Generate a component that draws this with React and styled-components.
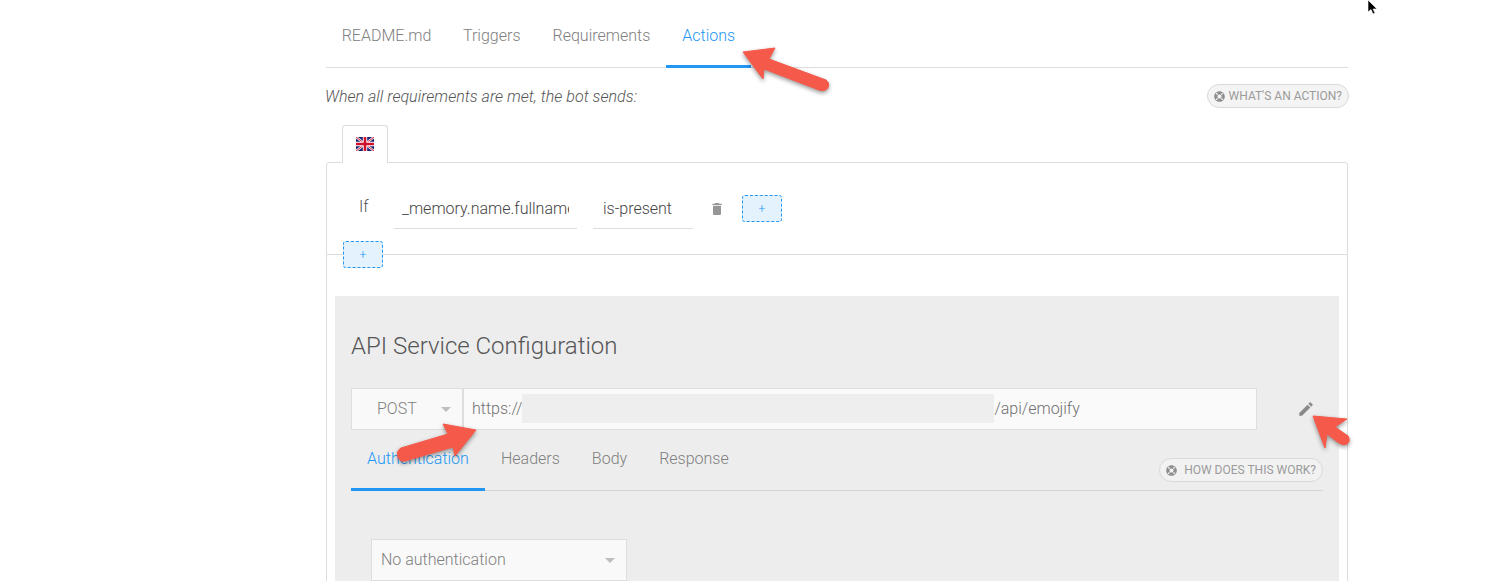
import React from "react";
import styled, { createGlobalStyle } from "styled-components";
import { FaLifeRing } from "react-icons/fa";
import { MdDelete, MdEdit } from "react-icons/md";

const Global = createGlobalStyle`
  html, body { margin: 0; padding: 0; background: #fff; }
  body { font-family: Roboto, "Liberation Sans", sans-serif; overflow: hidden; }
`;

const Page = styled.div`
  position: relative;
  width: 1504px;
  height: 581px;
  overflow: hidden;
  padding-left: 326px;
  box-sizing: border-box;
`;
const Column = styled.div`
  width: 1022px;
`;
const Tabs = styled.div`
  display: flex;
  height: ${(p) => p.$height}px;
  border-bottom: 1px solid ${(p) => p.$line};
  box-sizing: content-box;
`;
const Tab = styled.div`
  display: flex;
  align-items: center;
  justify-content: center;
  box-sizing: border-box;
  padding: ${(p) => p.$pad}px 16px ${(p) => p.$bottom}px;
  width: ${(p) => p.$w}px;
  margin-bottom: -1px;
  font-size: 16px;
  font-weight: 300;
  color: ${(p) => (p.$active ? "#2196f3" : "#808080")};
  border-bottom: 3px solid ${(p) => (p.$active ? "#2196f3" : "transparent")};
`;
const HintRow = styled.div`
  display: flex;
  align-items: center;
  justify-content: space-between;
  height: 57px;
  padding-bottom: 1px;
  box-sizing: border-box;
  margin-right: -1px;
`;
const Hint = styled.div`
  font-size: 16px;
  font-style: italic;
  font-weight: 300;
  color: #555;
  margin-left: -1px;
  letter-spacing: 0.03px;
`;
const Pill = styled.div`
  display: flex;
  align-items: center;
  gap: ${(p) => p.$gap}px;
  height: 24px;
  box-sizing: border-box;
  padding: 0 6px 0 ${(p) => p.$left}px;
  border: 1px solid #d9d9d9;
  border-radius: 12px;
  background: ${(p) => p.$bg};
  color: #9b9b9b;
  font-size: 12px;
  font-weight: 400;
  white-space: nowrap;
`;
const LangTab = styled.div`
  position: relative;
  z-index: 1;
  display: flex;
  align-items: center;
  justify-content: center;
  width: 46px;
  height: 38px;
  margin: 0 0 -1px 16px;
  padding-bottom: 1px;
  box-sizing: border-box;
  background: #fff;
  border: 1px solid #ddd;
  border-bottom: none;
  border-radius: 3px 3px 0 0;
`;
const ConditionPanel = styled.div`
  height: 93px;
  box-sizing: border-box;
  width: 1022px;
  border: 1px solid #ddd;
  border-radius: 3px 3px 0 0;
  padding: 32px 0 0 16px;
`;
const ConditionRow = styled.div`
  display: flex;
  align-items: flex-start;
`;
const IfLabel = styled.div`
  width: 51px;
  box-sizing: border-box;
  padding: 2px 0 0 16px;
  font-size: 16px;
  font-weight: 300;
  color: #555;
`;
const Field = styled.div`
  width: ${(p) => p.$w}px;
  height: 34px;
  margin-right: 16px;
  box-sizing: border-box;
  border-bottom: 1px solid #ddd;
  padding: ${(p) => p.$top}px 8px 0 ${(p) => p.$left}px;
  font-size: 16px;
  color: #444;
  font-weight: 300;
`;
const FieldClip = styled.div`
  overflow: hidden;
  white-space: nowrap;
`;
const TrashBox = styled.div`
  display: flex;
  justify-content: center;
  width: 16px;
  margin: 4px 17px 0 0;
  color: #969696;
  font-size: 20px;
`;
const AddButton = styled.div`
  position: relative;
  z-index: 1;
  display: flex;
  align-items: center;
  justify-content: center;
  width: 40px;
  height: 27px;
  box-sizing: border-box;
  background: #e3f2fd;
  border: 1px dashed #2196f3;
  border-radius: 3px;
  color: #2196f3;
  font-size: 12px;
  font-weight: 300;
  margin-top: ${(p) => p.$mt}px;
`;
const ActionPanel = styled.div`
  width: 1022px;
  height: 330px;
  box-sizing: border-box;
  border: 1px solid #ddd;
  border-top: none;
  padding: 41px 8px 0;
`;
const GreyBox = styled.div`
  background: #ededed;
  height: 300px;
  padding: 0 16px;
  box-sizing: border-box;
  width: 1004px;
`;
const Title = styled.h2`
  margin: 0;
  padding-top: 36px;
  height: 92px;
  box-sizing: border-box;
  font-size: 24px;
  line-height: 29px;
  font-weight: 300;
  color: #555;
`;
const UrlRow = styled.div`
  display: flex;
  align-items: stretch;
  height: 42px;
`;
const SelectBox = styled.div`
  display: flex;
  align-items: center;
  justify-content: space-between;
  box-sizing: border-box;
  width: ${(p) => p.$w}px;
  height: 42px;
  padding: 0 11px 2px ${(p) => p.$left}px;
  background: #f9f9f9;
  border: 1px solid #ddd;
  font-size: 16px;
  font-weight: 300;
  color: #808080;
`;
const Caret = styled.span`
  width: 0;
  height: 0;
  margin-top: 2px;
  border-left: 5px solid transparent;
  border-right: 5px solid transparent;
  border-top: 5px solid #bdbdbd;
`;
const UrlInput = styled.div`
  display: flex;
  align-items: center;
  box-sizing: border-box;
  width: 794px;
  padding: 0 0 2px 8px;
  background: #fafafa;
  border: 1px solid #ddd;
  font-size: 16px;
  color: #707070;
  font-weight: 300;
`;
const Redaction = styled.div`
  width: 472px;
  height: 29px;
  background: #eeeeee;
`;
const EditIcon = styled.div`
  display: flex;
  align-items: center;
  margin-left: 40px;
  color: #8a8a8a;
  font-size: 18px;
`;
const SubTabsWrap = styled.div`
  width: 972px;
  position: relative;
`;
const PillSlot = styled.div`
  position: absolute;
  right: 0;
  top: 28px;
`;
const AuthWrap = styled.div`
  padding: 48px 0 0 20px;
`;
const Cursor = styled.svg`
  position: absolute;
  left: 1367px;
  top: -1px;
`;
const Overlay = styled.svg`
  position: absolute;
  left: 0;
  top: 0;
  pointer-events: none;
  filter: drop-shadow(0 2px 2px rgba(0, 0, 0, 0.4));
`;

const Flag = () => (
  <svg width="18" height="14" viewBox="0 0 18 14">
    <rect width="18" height="14" fill="#1a2272" />
    <path d="M0 0L18 14M18 0L0 14" stroke="#f3e6ea" strokeWidth="2.4" />
    <path d="M0 0L18 14M18 0L0 14" stroke="#d0203a" strokeWidth="0.9" />
    <path d="M9 0V14M0 7H18" stroke="#fff" strokeWidth="4.4" />
    <path d="M9 0V14M0 7H18" stroke="#d0102a" strokeWidth="2.6" />
  </svg>
);

const Arrows = () => (
  <Overlay width="1504" height="581" viewBox="0 0 1504 581">
    <g fill="#f5594a" stroke="#f5594a" strokeLinejoin="round">
      <path d="M743 52L775 48L769 59L826 80Q831 84 827 89Q824 92 819 90L764 69L763 79Z" strokeWidth="1" />
      <path d="M476 430L443 424L448 434L401 448Q396 451 398 457Q400 462 405 461L453 447L455 456Z" strokeWidth="1" />
      <path d="M1313 416L1347 419L1335 427L1348 436Q1351 441 1347 444Q1343 446 1339 443L1327 434L1325 448Z" strokeWidth="1" />
    </g>
  </Overlay>
);

export default function App() {
  return (
    <Page>
      <Global />
      <Column>
        <Tabs $height={67} $line="#ddd">
          <Tab $pad={6} $bottom={0} $w={121}>README.md</Tab>
          <Tab $pad={6} $bottom={0}>Triggers</Tab>
          <Tab $pad={6} $bottom={0}>Requirements</Tab>
          <Tab $pad={6} $bottom={0} $active $w={85}>Actions</Tab>
        </Tabs>
        <HintRow>
          <Hint>When all requirements are met, the bot sends:</Hint>
          <Pill $bg="#f4f4f4" $gap={4} $left={6}>
            <FaLifeRing size={11} color="#8f8f8f" />
            WHAT'S AN ACTION?
          </Pill>
        </HintRow>
        <LangTab><Flag /></LangTab>
        <ConditionPanel>
          <ConditionRow>
            <IfLabel>If</IfLabel>
            <Field $w={183} $top={4} $left={8}><FieldClip>_memory.name.fullname</FieldClip></Field>
            <Field $w={100} $top={4} $left={10}><FieldClip>is-present</FieldClip></Field>
            <TrashBox><MdDelete /></TrashBox>
            <AddButton>+</AddButton>
          </ConditionRow>
          <AddButton $mt={12}>+</AddButton>
        </ConditionPanel>
        <ActionPanel>
          <GreyBox>
            <Title>API Service Configuration</Title>
            <UrlRow>
              <SelectBox $w={112} $left={25}>POST<Caret /></SelectBox>
              <UrlInput>https://<Redaction />/api/emojify</UrlInput>
              <EditIcon><MdEdit /></EditIcon>
            </UrlRow>
            <SubTabsWrap>
              <Tabs $height={60} $line="#d6d6d6">
                <Tab $pad={0} $bottom={2} $active $w={134}>Authentication</Tab>
                <Tab $pad={0} $bottom={2}>Headers</Tab>
                <Tab $pad={0} $bottom={2}>Body</Tab>
                <Tab $pad={0} $bottom={2}>Response</Tab>
              </Tabs>
              <PillSlot>
                <Pill $bg="#f2f2f2" $gap={7} $left={6}>
                  <FaLifeRing size={11} color="#8f8f8f" />
                  HOW DOES THIS WORK?
                </Pill>
              </PillSlot>
            </SubTabsWrap>
            <AuthWrap>
              <SelectBox $w={256} $left={9}>No authentication<Caret /></SelectBox>
            </AuthWrap>
          </GreyBox>
        </ActionPanel>
      </Column>
      <Arrows />
      <Cursor width="12" height="16" viewBox="0 0 12 16">
        <path d="M1 1V13L4 10.5L6 15L8 14L6 10H10Z" fill="#000" stroke="#fff" strokeWidth="0.6" />
      </Cursor>
    </Page>
  );
}
